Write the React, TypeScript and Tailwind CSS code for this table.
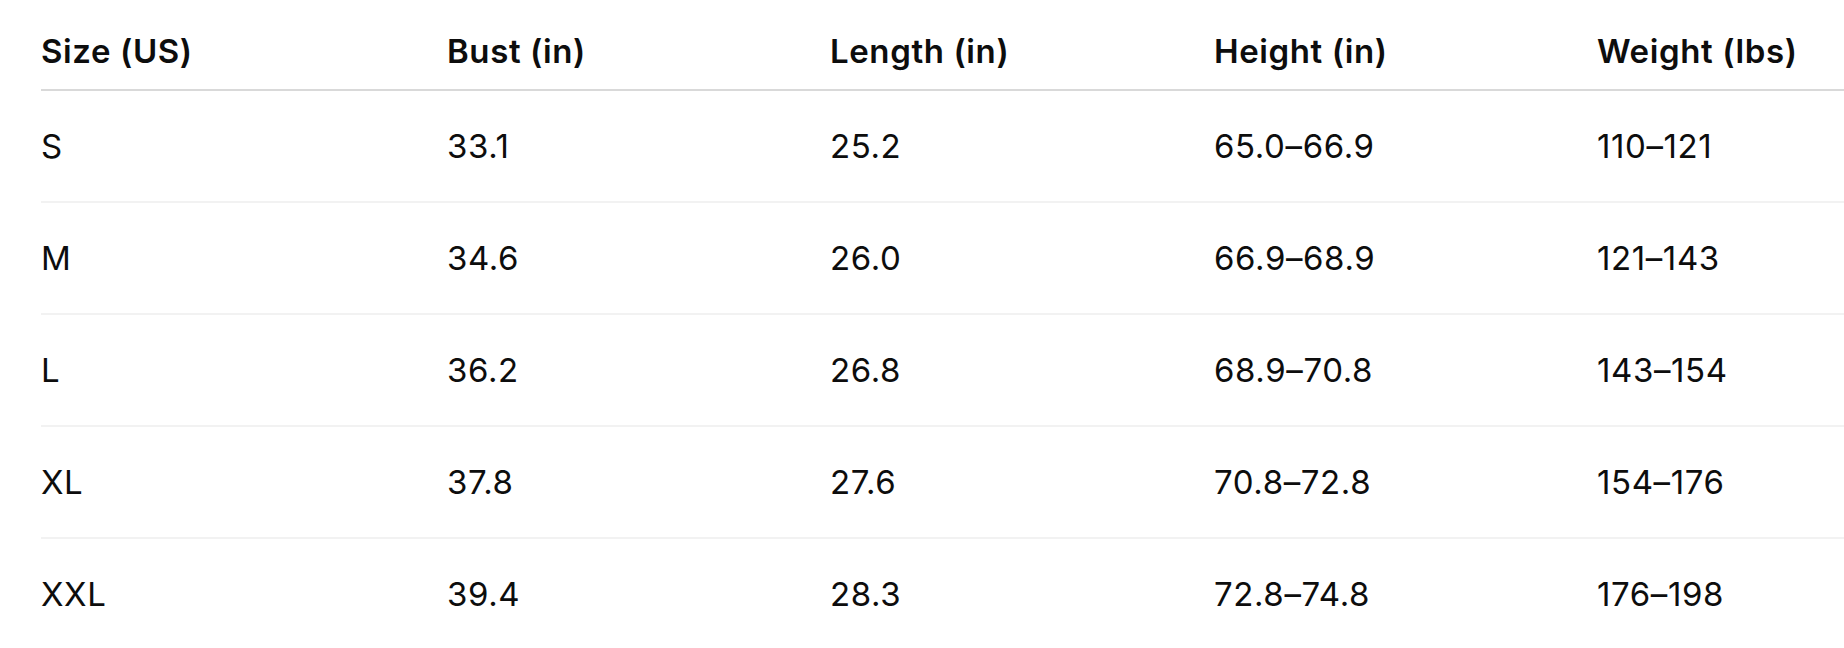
const rows = [
	['S', '33.1', '25.2', '65.0–66.9', '110–121'],
	['M', '34.6', '26.0', '66.9–68.9', '121–143'],
	['L', '36.2', '26.8', '68.9–70.8', '143–154'],
	['XL', '37.8', '27.6', '70.8–72.8', '154–176'],
	['XXL', '39.4', '28.3', '72.8–74.8', '176–198'],
];

const headers = ['Size (US)', 'Bust (in)', 'Length (in)', 'Height (in)', 'Weight (lbs)'];
const widths = ['w-[406px]', 'w-[383px]', 'w-[384px]', 'w-[383px]', 'w-[247px]'];

export default function App() {
	return (
		<div
			className="w-[1844px] h-[648px] overflow-hidden bg-white text-[#0d0d0d]"
			style={{ fontFamily: 'Inter, "Noto Sans", sans-serif' }}
		>
			<table className="ml-[41px] w-[1803px] table-fixed border-collapse text-[33px] leading-[40px] tracking-[0.6px]">
				<colgroup>
					{widths.map((w, i) => (
						<col key={i} className={w} />
					))}
				</colgroup>
				<thead>
					<tr className="border-b-2 border-[#d9d9d9]">
						{headers.map((h) => (
							<th key={h} className="pt-[31px] pb-[18px] p-0 text-left font-semibold">
								{h}
							</th>
						))}
					</tr>
				</thead>
				<tbody>
					{rows.map((row, r) => (
						<tr key={row[0]} className={r < rows.length - 1 ? 'border-b-2 border-[#f2f2f2]' : ''}>
							{row.map((cell, i) => (
								<td key={i} className="py-[35px] text-left font-normal">
									{cell}
								</td>
							))}
						</tr>
					))}
				</tbody>
			</table>
		</div>
	);
}
